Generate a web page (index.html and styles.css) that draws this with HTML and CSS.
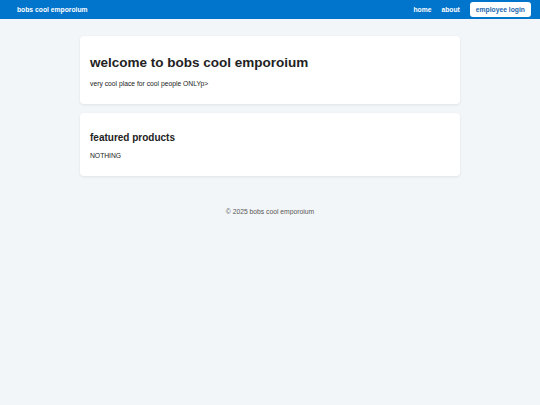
FILE: index.html
```html
<!DOCTYPE html>
<html lang="en">
<head>
    <meta charset="UTF-8" />
    <meta name="viewport" content="width=device-width, initial-scale=1.0"/>
    <title>bobs cool emporoium</title>
    <link rel="stylesheet" href="styles.css">
</head>
<body>
    <header class="topbar">
        <a class="brand" href="#">bobs cool emporoium</a>
        <nav class="nav">
            <a href="#">home</a>
            <a href="#">about</a>
            <a class="login-btn" href="#">employee login</a>
        </nav>
    </header>

    <main class="content">
        <section class="card">
            <h1>welcome to bobs cool emporoium</h1>
            <p>very cool place for cool people ONLYp&gt;</p>
        </section>

        <section class="card">
            <h2>featured products</h2>
            <p>NOTHING</p>
        </section>
    </main>

    <footer class="footer">
        &copy; 2025 bobs cool emporoium
    </footer>
</body>
</html>
```

FILE: styles.css
```css
body {
    font-family: "Liberation Sans", Arial, sans-serif;
    font-size: 6.75px;
    background: #f3f6f9;
    color: #222;
    margin: 0;
    padding: 0;
}

a {
    text-decoration: none;
}

.topbar {
    height: 19px;
    background: #0174cc;
    display: flex;
    align-items: center;
    justify-content: space-between;
    padding: 0 9px 0 17px;
}

.brand {
    color: #fff;
    font-weight: bold;
    font-size: 6.75px;
}

.nav {
    display: flex;
    align-items: center;
    gap: 10px;
}

.nav a {
    color: #fff;
    font-weight: bold;
    font-size: 6.75px;
}

.nav .login-btn {
    background: #fff;
    color: #1a66ad;
    padding: 4px 6px;
    border-radius: 3px;
}

.content {
    max-width: 380px;
    margin: 17px auto 0;
    display: flex;
    flex-direction: column;
    gap: 9px;
}

.card {
    background: #fff;
    border-radius: 4px;
    box-shadow: 0 1px 3px rgba(0,0,0,0.08);
    padding: 10px;
}

.card h1 {
    font-size: 13.5px;
    margin: 9px 0 10px;
}

.card h2 {
    font-size: 10px;
    margin: 9px 0 9px;
}

.card p {
    margin: 0 0 7px;
    font-size: 6.75px;
}

.footer {
    text-align: center;
    color: #555;
    font-size: 6.75px;
    margin-top: 32px;
}
```
